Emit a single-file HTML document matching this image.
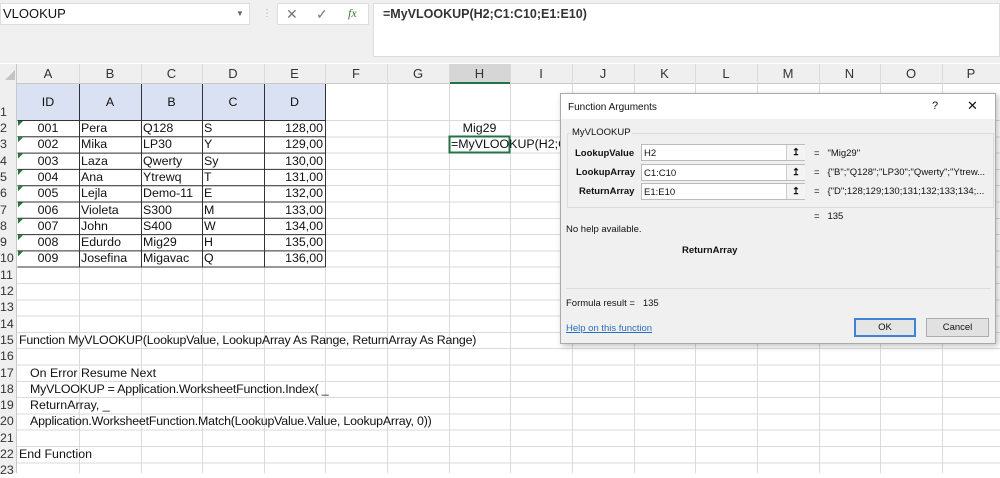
<!DOCTYPE html>
<html><head><meta charset="utf-8"><style>
*{margin:0;padding:0;box-sizing:border-box}
body{width:1000px;height:473px;overflow:hidden;background:#fff;font-family:"Liberation Sans",Arial,sans-serif;font-size:12.4px;color:#111;position:relative}
.a{position:absolute;white-space:nowrap}
.vl{position:absolute;top:64px;bottom:0;width:1px;background:#dadada}
.ch{position:absolute;top:64px;height:20px;line-height:20px;text-align:center;font-size:13px;color:#333}
.rh{position:absolute;left:0;width:17px;font-size:12.4px;color:#333;line-height:16px}
.t{position:absolute;line-height:16px;font-size:12.4px;white-space:nowrap}
.dlg{font-family:"Liberation Sans",Arial,sans-serif;font-size:9.5px;color:#111}
</style></head><body>
<div class="a" style="left:0;top:0;width:1000px;height:63px;background:#f0f0f0"></div>
<div class="a" style="left:0;top:3px;width:250px;height:22px;background:#fff;border:1px solid #ddd;line-height:20px;padding-left:2px;font-size:13px">VLOOKUP</div>
<div class="a" style="left:236px;top:9px;font-size:8px;color:#666">▼</div>
<div class="a" style="left:262px;top:8px;color:#aaa;font-size:10px">⋮</div>
<div class="a" style="left:277px;top:3px;width:92px;height:22px;background:#fff;border:1px solid #ddd"></div>
<div class="a" style="left:286px;top:6px;color:#777;font-size:14px">✕</div>
<div class="a" style="left:316px;top:6px;color:#777;font-size:14px">✓</div>
<div class="a" style="left:348px;top:6px;color:#3a7a3a;font-size:12px;font-style:italic;font-family:'Liberation Serif',serif">fx</div>
<div class="a" style="left:373px;top:3px;width:627px;height:54px;background:#fff;border:1px solid #ddd"></div>
<div class="a" style="left:383px;top:7px;font-size:12.5px;font-weight:bold;color:#333">=MyVLOOKUP(H2;C1:C10;E1:E10)</div>
<div class="a" style="left:0;top:64px;width:1000px;height:20px;background:#efefef;border-bottom:1px solid #c8c8c8"></div>
<div class="a" style="left:0;top:64px;width:17px;height:409px;background:#efefef;border-right:1px solid #c8c8c8"></div>
<div class="a" style="left:5px;top:70px;width:0;height:0;border-left:10px solid transparent;border-bottom:10px solid #c4c4c4"></div>
<div class="a" style="left:449px;top:64px;width:61px;height:20px;background:#d6d6d6;border-bottom:2px solid #217346"></div>
<div class="a" style="left:17px;top:120px;width:983px;height:353px;background:repeating-linear-gradient(#dadada 0 1px,transparent 1px 16.3px)"></div>
<div class="vl" style="left:79px"></div><div class="vl" style="left:141px"></div><div class="vl" style="left:202px"></div><div class="vl" style="left:264px"></div><div class="vl" style="left:325px"></div><div class="vl" style="left:387px"></div><div class="vl" style="left:449px"></div><div class="vl" style="left:510px"></div><div class="vl" style="left:572px"></div><div class="vl" style="left:634px"></div><div class="vl" style="left:695px"></div><div class="vl" style="left:757px"></div><div class="vl" style="left:819px"></div><div class="vl" style="left:880px"></div><div class="vl" style="left:942px"></div>
<div class="ch" style="left:17px;width:62px">A</div><div class="ch" style="left:79px;width:62px">B</div><div class="ch" style="left:141px;width:61px">C</div><div class="ch" style="left:202px;width:62px">D</div><div class="ch" style="left:264px;width:61px">E</div><div class="ch" style="left:325px;width:62px">F</div><div class="ch" style="left:387px;width:62px">G</div><div class="ch" style="left:449px;width:61px">H</div><div class="ch" style="left:510px;width:62px">I</div><div class="ch" style="left:572px;width:62px">J</div><div class="ch" style="left:634px;width:61px">K</div><div class="ch" style="left:695px;width:62px">L</div><div class="ch" style="left:757px;width:62px">M</div><div class="ch" style="left:819px;width:61px">N</div><div class="ch" style="left:880px;width:62px">O</div><div class="ch" style="left:942px;width:58px">P</div>
<div class="rh" style="top:104px">1</div><div class="rh" style="top:120px">2</div><div class="rh" style="top:136.3px">3</div><div class="rh" style="top:152.6px">4</div><div class="rh" style="top:168.9px">5</div><div class="rh" style="top:185.2px">6</div><div class="rh" style="top:201.5px">7</div><div class="rh" style="top:217.8px">8</div><div class="rh" style="top:234.1px">9</div><div class="rh" style="top:250.4px">10</div><div class="rh" style="top:266.7px">11</div><div class="rh" style="top:283px">12</div><div class="rh" style="top:299.3px">13</div><div class="rh" style="top:315.6px">14</div><div class="rh" style="top:331.9px">15</div><div class="rh" style="top:348.2px">16</div><div class="rh" style="top:364.5px">17</div><div class="rh" style="top:380.8px">18</div><div class="rh" style="top:397.1px">19</div><div class="rh" style="top:413.4px">20</div><div class="rh" style="top:429.7px">21</div><div class="rh" style="top:446px">22</div><div class="rh" style="top:462.3px">23</div>
<div class="a" style="left:17px;top:84px;width:309px;height:36px;background:#d9e1f2"></div>
<svg class="a" style="left:0;top:0" width="1000" height="473">
<g stroke="#333" stroke-width="1" fill="none">
<path d="M17.5 120.5H325.5M17.5 136.8H325.5M17.5 153.1H325.5M17.5 169.4H325.5M17.5 185.7H325.5M17.5 202H325.5M17.5 218.3H325.5M17.5 234.6H325.5M17.5 250.9H325.5M17.5 267H325.5"/>
<path d="M79.5 84V267M141.5 84V267M202.5 84V267M264.5 84V267M325.5 84V267"/>
</g>
<g fill="#1e7a3c"><path d="M18 121h5l-5 5z"/><path d="M18 137.3h5l-5 5z"/><path d="M18 153.6h5l-5 5z"/><path d="M18 169.9h5l-5 5z"/><path d="M18 186.2h5l-5 5z"/><path d="M18 202.5h5l-5 5z"/><path d="M18 218.8h5l-5 5z"/><path d="M18 235.1h5l-5 5z"/><path d="M18 251.4h5l-5 5z"/></g>
<rect x="449.5" y="136.5" width="60" height="16" stroke="#217346" stroke-width="2" fill="none"/>
</svg>
<div class="t" style="left:17px;top:94px;width:62px;text-align:center">ID</div>
<div class="t" style="left:79px;top:94px;width:62px;text-align:center">A</div>
<div class="t" style="left:141px;top:94px;width:61px;text-align:center">B</div>
<div class="t" style="left:202px;top:94px;width:62px;text-align:center">C</div>
<div class="t" style="left:264px;top:94px;width:61px;text-align:center">D</div>
<div class="t" style="left:17px;top:120px;width:62px;text-align:center">001</div><div class="t" style="left:81px;top:120px">Pera</div><div class="t" style="left:143px;top:120px">Q128</div><div class="t" style="left:204px;top:120px">S</div><div class="t" style="left:264px;top:120px;width:59px;text-align:right">128,00</div>
<div class="t" style="left:17px;top:136.3px;width:62px;text-align:center">002</div><div class="t" style="left:81px;top:136.3px">Mika</div><div class="t" style="left:143px;top:136.3px">LP30</div><div class="t" style="left:204px;top:136.3px">Y</div><div class="t" style="left:264px;top:136.3px;width:59px;text-align:right">129,00</div>
<div class="t" style="left:17px;top:152.6px;width:62px;text-align:center">003</div><div class="t" style="left:81px;top:152.6px">Laza</div><div class="t" style="left:143px;top:152.6px">Qwerty</div><div class="t" style="left:204px;top:152.6px">Sy</div><div class="t" style="left:264px;top:152.6px;width:59px;text-align:right">130,00</div>
<div class="t" style="left:17px;top:168.9px;width:62px;text-align:center">004</div><div class="t" style="left:81px;top:168.9px">Ana</div><div class="t" style="left:143px;top:168.9px">Ytrewq</div><div class="t" style="left:204px;top:168.9px">T</div><div class="t" style="left:264px;top:168.9px;width:59px;text-align:right">131,00</div>
<div class="t" style="left:17px;top:185.2px;width:62px;text-align:center">005</div><div class="t" style="left:81px;top:185.2px">Lejla</div><div class="t" style="left:143px;top:185.2px">Demo-11</div><div class="t" style="left:204px;top:185.2px">E</div><div class="t" style="left:264px;top:185.2px;width:59px;text-align:right">132,00</div>
<div class="t" style="left:17px;top:201.5px;width:62px;text-align:center">006</div><div class="t" style="left:81px;top:201.5px">Violeta</div><div class="t" style="left:143px;top:201.5px">S300</div><div class="t" style="left:204px;top:201.5px">M</div><div class="t" style="left:264px;top:201.5px;width:59px;text-align:right">133,00</div>
<div class="t" style="left:17px;top:217.8px;width:62px;text-align:center">007</div><div class="t" style="left:81px;top:217.8px">John</div><div class="t" style="left:143px;top:217.8px">S400</div><div class="t" style="left:204px;top:217.8px">W</div><div class="t" style="left:264px;top:217.8px;width:59px;text-align:right">134,00</div>
<div class="t" style="left:17px;top:234.1px;width:62px;text-align:center">008</div><div class="t" style="left:81px;top:234.1px">Edurdo</div><div class="t" style="left:143px;top:234.1px">Mig29</div><div class="t" style="left:204px;top:234.1px">H</div><div class="t" style="left:264px;top:234.1px;width:59px;text-align:right">135,00</div>
<div class="t" style="left:17px;top:250.4px;width:62px;text-align:center">009</div><div class="t" style="left:81px;top:250.4px">Josefina</div><div class="t" style="left:143px;top:250.4px">Migavac</div><div class="t" style="left:204px;top:250.4px">Q</div><div class="t" style="left:264px;top:250.4px;width:59px;text-align:right">136,00</div>
<div class="t" style="left:449px;top:120px;width:61px;text-align:center">Mig29</div>
<div class="t" style="left:451px;top:136.3px">=MyVLOOKUP(H2;C</div>
<div class="t" style="left:19px;top:331.9px;letter-spacing:-0.2px">Function MyVLOOKUP(LookupValue, LookupArray As Range, ReturnArray As Range)</div>
<div class="t" style="left:30px;top:364.5px">On Error Resume Next</div>
<div class="t" style="left:30px;top:380.8px;letter-spacing:-0.2px">MyVLOOKUP = Application.WorksheetFunction.Index( _</div>
<div class="t" style="left:30px;top:397.1px">ReturnArray, _</div>
<div class="t" style="left:30px;top:413.4px;letter-spacing:-0.2px">Application.WorksheetFunction.Match(LookupValue.Value, LookupArray, 0))</div>
<div class="t" style="left:19px;top:446px">End Function</div>
<div class="a dlg" style="left:560px;top:93px;width:436px;height:251px;background:#f0f0f0;border:1px solid #aaa;box-shadow:2px 2px 6px rgba(0,0,0,.25)">
 <div class="a" style="left:0;top:0;width:434px;height:25px;background:#fff"></div>
 <div class="a" style="left:7px;top:8px;font-size:10px">Function Arguments</div>
 <div class="a" style="left:371px;top:6px;font-size:11px">?</div>
 <div class="a" style="left:406px;top:4px;font-size:13px">✕</div>
 <div class="a" style="left:6px;top:39px;width:427px;height:75px;border:1px solid #dcdcdc"></div>
 <div class="a" style="left:10px;top:33px;background:#f0f0f0;padding:0 1px">MyVLOOKUP</div>
 <div class="a" style="left:14px;top:54px;font-weight:bold">LookupValue</div>
 <div class="a" style="left:15px;top:73px;font-weight:bold">LookupArray</div>
 <div class="a" style="left:18px;top:92px;font-weight:bold">ReturnArray</div>
 <div class="a" style="left:80px;top:50px;width:164px;height:17px;background:#fff;border:1px solid #bbb;padding:3px 2px">H2</div>
 <div class="a" style="left:80px;top:70px;width:164px;height:17px;background:#fff;border:1px solid #bbb;padding:3px 2px">C1:C10</div>
 <div class="a" style="left:80px;top:89px;width:164px;height:17px;background:#fff;border:1px solid #bbb;padding:3px 2px">E1:E10</div>
 <div class="a" style="left:225px;top:51px;width:19px;height:15px;background:#f4f4f4;border-left:1px solid #ccc;text-align:center;font-weight:bold;line-height:15px">↥</div>
 <div class="a" style="left:225px;top:71px;width:19px;height:15px;background:#f4f4f4;border-left:1px solid #ccc;text-align:center;font-weight:bold;line-height:15px">↥</div>
 <div class="a" style="left:225px;top:90px;width:19px;height:15px;background:#f4f4f4;border-left:1px solid #ccc;text-align:center;font-weight:bold;line-height:15px">↥</div>
 <div class="a" style="left:253px;top:54px">=&nbsp;&nbsp; "Mig29"</div>
 <div class="a" style="left:253px;top:73px">=&nbsp;&nbsp; {"B";"Q128";"LP30";"Qwerty";"Ytrew...</div>
 <div class="a" style="left:253px;top:92px">=&nbsp;&nbsp; {"D";128;129;130;131;132;133;134;...</div>
 <div class="a" style="left:253px;top:117px">=&nbsp;&nbsp; 135</div>
 <div class="a" style="left:5px;top:130px">No help available.</div>
 <div class="a" style="left:121px;top:151px;font-weight:bold">ReturnArray</div>
 <div class="a" style="left:5px;top:194px;width:425px;height:1px;background:#ddd"></div>
 <div class="a" style="left:5px;top:204px">Formula result =&nbsp;&nbsp; 135</div>
 <div class="a" style="left:5px;top:229px;color:#2a6ebb;text-decoration:underline">Help on this function</div>
 <div class="a" style="left:293px;top:224px;width:62px;height:19px;background:#e5e5e5;border:2px solid #3c84d4;text-align:center;line-height:15px">OK</div>
 <div class="a" style="left:365px;top:224px;width:63px;height:19px;background:#e1e1e1;border:1px solid #adadad;text-align:center;line-height:17px">Cancel</div>
</div>
</body></html>
